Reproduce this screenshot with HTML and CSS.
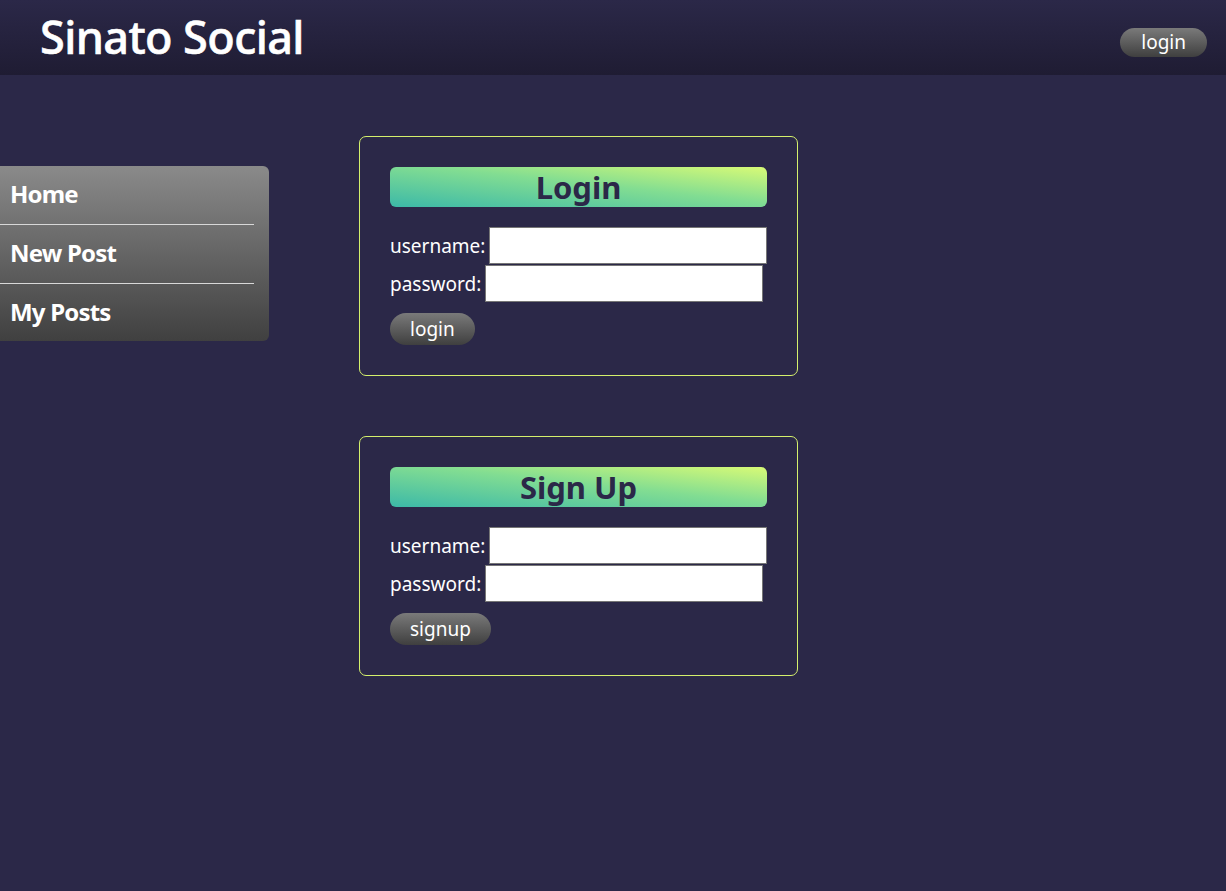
FILE: index.html
```html
<!DOCTYPE html>
<html>
<head>
<meta charset="utf-8">
<link rel="stylesheet" href="styles.css">
</head>
<body>
<header class="topbar">
  <h1 class="brand">Sinato Social</h1>
  <button class="pill top-pill">login</button>
</header>
<div class="layout">
  <nav class="sidebar">
    <a class="nav-item" href="#">Home</a>
    <a class="nav-item" href="#">New Post</a>
    <a class="nav-item" href="#">My Posts</a>
  </nav>
  <main class="main">
    <section class="card">
      <h2 class="card-title">Login</h2>
      <div class="row"><label>username:</label><input class="field user" type="text"></div>
      <div class="row"><label>password:</label><input class="field" type="password"></div>
      <button class="pill">login</button>
    </section>
    <section class="card">
      <h2 class="card-title">Sign Up</h2>
      <div class="row"><label>username:</label><input class="field user" type="text"></div>
      <div class="row"><label>password:</label><input class="field" type="password"></div>
      <button class="pill">signup</button>
    </section>
  </main>
</div>
</body>
</html>
```
FILE: styles.css
```css
html, body {
  margin: 0;
  padding: 0;
}
body {
  background: #2b2848;
  color: #fff;
  font-family: "Noto Sans", "Open Sans", sans-serif;
  min-height: 891px;
}
.topbar {
  height: 75px;
  box-sizing: border-box;
  display: flex;
  align-items: center;
  justify-content: space-between;
  padding: 0 19px 0 40px;
  background: linear-gradient(to bottom, #2b2848 0%, #1f1c33 100%);
}
.brand {
  margin: 0;
  font-size: 45px;
  font-weight: 500;
  letter-spacing: -0.6px;
  color: #fff;
  line-height: 1;
  padding-bottom: 2px;
  -webkit-text-stroke: 0.6px #fff;
}
.pill {
  border: none;
  border-radius: 17px;
  height: 32px;
  padding: 0 20px;
  font-family: inherit;
  font-size: 19px;
  color: #fff;
  background: linear-gradient(to bottom, #7a7a7a, #3f3f3f);
  cursor: pointer;
  line-height: 1;
}
.top-pill {
  height: 29px;
  margin-top: 10px;
  padding: 0 21px;
}
.layout {
  display: flex;
  align-items: flex-start;
}
.sidebar {
  margin-top: 91px;
  width: 269px;
  display: flex;
  flex-direction: column;
  background: linear-gradient(to bottom, #8a8a8a, #404040);
  border-radius: 0 6px 6px 0;
}
.nav-item {
  display: flex;
  align-items: center;
  height: 58px;
  box-sizing: border-box;
  padding: 0 0 3px 10px;
  margin-right: 15px;
  font-size: 24px;
  font-weight: 700;
  letter-spacing: -0.8px;
  color: #fff;
  text-decoration: none;
  border-bottom: 1px solid #d8d8d8;
  height: 59px;
}
.nav-item:last-child {
  border-bottom: none;
  height: 57px;
}
.main {
  margin-left: 90px;
  padding-top: 61px;
  display: flex;
  flex-direction: column;
  gap: 60px;
}
.card {
  width: 439px;
  box-sizing: border-box;
  border: 1px solid #d4f06c;
  border-radius: 7px;
  padding: 30px 30px 30px 30px;
}
.card-title {
  margin: 0 0 20px 0;
  height: 40px;
  border-radius: 6px;
  background: linear-gradient(to top right, #3cb9a8 0%, #82dd92 55%, #d8fa76 100%);
  color: #2b2848;
  font-size: 31px;
  font-weight: 700;
  text-align: center;
  line-height: 40px;
}
.row {
  display: flex;
  align-items: center;
  gap: 4px;
  margin-bottom: 1px;
  font-size: 19px;
}
.field {
  width: 278px;
  height: 37px;
  box-sizing: border-box;
  border: 1px solid #767676;
  background: #fff;
  margin: 0;
}
.card .pill {
  margin-top: 10px;
}
```
